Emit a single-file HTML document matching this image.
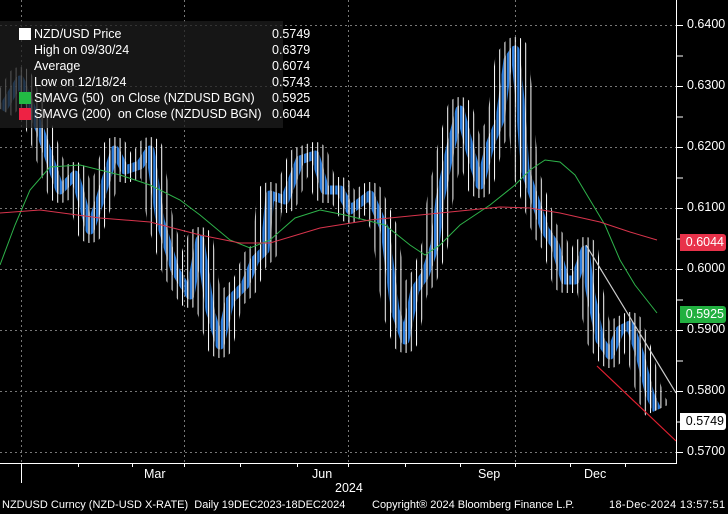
<!DOCTYPE html>
<html><head><meta charset="utf-8"><style>
body{margin:0;background:#000;width:728px;height:514px;overflow:hidden;font-family:"Liberation Sans",sans-serif;position:relative}
svg{position:absolute;left:0;top:0}
.lg{position:absolute;left:0;top:21px;width:283px;height:107px;background:rgba(30,30,30,0.75);color:#fff;font-size:12.5px}
.t{position:absolute;left:34px;height:16px;line-height:16px;white-space:nowrap}
.v{position:absolute;left:272px;height:16px;line-height:16px}
.sq{position:absolute;left:19px;width:12px;height:12px}
.ax{position:absolute;color:#fff;font-size:12.5px;white-space:nowrap}
.ft{position:absolute;color:#fff;font-size:11px;white-space:nowrap;top:499px}
.tag{position:absolute;left:680px;width:46px;height:17px;line-height:17px;font-size:12.5px;text-align:right;padding-right:2px;box-sizing:border-box;border-radius:0 3px 3px 0}
</style></head><body>
<svg width="728" height="514">
<defs>
<pattern id="wk" width="5.2" height="7" patternUnits="userSpaceOnUse">
<rect x="0" y="0" width="1" height="7" fill="#fff"/></pattern>
<pattern id="bd" width="5.2" height="6" patternUnits="userSpaceOnUse">
<rect x="0" y="0" width="1.2" height="6" fill="#fff"/><rect x="2.4" y="0" width="2.4" height="6" fill="#2d7fe0"/></pattern>
</defs>
<g stroke="#777" stroke-dasharray="2,3" stroke-width="1">
<line x1="0" x2="676" y1="25.5" y2="25.5"/><line x1="0" x2="676" y1="86.5" y2="86.5"/><line x1="0" x2="676" y1="147.5" y2="147.5"/><line x1="0" x2="676" y1="208.5" y2="208.5"/><line x1="0" x2="676" y1="269.5" y2="269.5"/><line x1="0" x2="676" y1="330.5" y2="330.5"/><line x1="0" x2="676" y1="391.5" y2="391.5"/><line x1="0" x2="676" y1="452.5" y2="452.5"/>
<line x1="21.5" x2="21.5" y1="0" y2="463"/><line x1="184.5" x2="184.5" y1="0" y2="463"/><line x1="348.5" x2="348.5" y1="0" y2="463"/><line x1="515.5" x2="515.5" y1="0" y2="463"/>
</g>
<g fill="none" stroke-linejoin="round">
<polyline stroke="url(#wk)" stroke-width="26" points="2,110 20,80 40,130 50,160 60,190 75,175 90,230 100,200 115,150 125,170 140,165 150,150 160,220 175,270 190,295 200,240 210,310 220,345 230,300 245,285 255,260 265,250 270,195 285,200 300,160 315,155 325,190 340,190 350,210 370,195 385,230 395,310 405,340 415,290 425,275 435,245 440,200 450,150 460,110 470,150 480,185 490,145 500,120 508,60 515,50 520,100 525,170 535,200 545,230 555,245 565,280 575,280 585,250 590,290 600,340 610,355 620,330 630,325 640,355 645,375 650,395 657,410"/>
<polyline stroke="url(#bd)" stroke-width="9" points="2,110 20,80 40,130 50,160 60,190 75,175 90,230 100,200 115,150 125,170 140,165 150,150 160,220 175,270 190,295 200,240 210,310 220,345 230,300 245,285 255,260 265,250 270,195 285,200 300,160 315,155 325,190 340,190 350,210 370,195 385,230 395,310 405,340 415,290 425,275 435,245 440,200 450,150 460,110 470,150 480,185 490,145 500,120 508,60 515,50 520,100 525,170 535,200 545,230 555,245 565,280 575,280 585,250 590,290 600,340 610,355 620,330 630,325 640,355 645,375 650,395 657,410"/>
</g>
<polyline fill="none" stroke="#2eb34a" stroke-width="1" points="0,265 15,225 30,190 50,167 80,165 120,175 150,185 180,200 200,215 230,240 250,248 270,240 295,218 320,210 345,215 365,220 385,225 410,245 425,255 440,245 460,225 490,205 515,185 530,170 545,160 560,162 575,175 590,200 605,225 620,260 635,285 657,313"/>
<polyline fill="none" stroke="#d8344c" stroke-width="1" points="0,213 40,210 100,218 150,222 200,235 240,243 270,243 320,228 370,220 420,215 470,210 500,207 530,208 560,213 600,222 630,232 657,240"/>
<line x1="586" y1="245" x2="676" y2="393" stroke="#ccc" stroke-width="1.2"/>
<line x1="597" y1="366" x2="676" y2="441" stroke="#e02030" stroke-width="1.2"/>
<rect x="677" y="0" width="51" height="514" fill="#000"/>
<rect x="0" y="464" width="728" height="50" fill="#000"/>
<line x1="676.5" x2="676.5" y1="0" y2="464" stroke="#fff"/><line x1="0" x2="677" y1="463.5" y2="463.5" stroke="#fff"/>
<g stroke="#fff">
<line x1="677" x2="683" y1="25.5" y2="25.5"/><line x1="677" x2="683" y1="56" y2="56"/><line x1="677" x2="683" y1="86.5" y2="86.5"/><line x1="677" x2="683" y1="117" y2="117"/><line x1="677" x2="683" y1="147.5" y2="147.5"/><line x1="677" x2="683" y1="178" y2="178"/><line x1="677" x2="683" y1="208.5" y2="208.5"/><line x1="677" x2="683" y1="239" y2="239"/><line x1="677" x2="683" y1="269.5" y2="269.5"/><line x1="677" x2="683" y1="300" y2="300"/><line x1="677" x2="683" y1="330.5" y2="330.5"/><line x1="677" x2="683" y1="361" y2="361"/><line x1="677" x2="683" y1="391.5" y2="391.5"/><line x1="677" x2="683" y1="422" y2="422"/><line x1="677" x2="683" y1="452.5" y2="452.5"/>
<line x1="21.5" x2="21.5" y1="463" y2="483"/><line x1="78.5" x2="78.5" y1="463" y2="467"/><line x1="132.5" x2="132.5" y1="463" y2="467"/><line x1="184.5" x2="184.5" y1="463" y2="467"/><line x1="240.5" x2="240.5" y1="463" y2="467"/><line x1="297.5" x2="297.5" y1="463" y2="467"/><line x1="348.5" x2="348.5" y1="463" y2="467"/><line x1="405.5" x2="405.5" y1="463" y2="467"/><line x1="460.5" x2="460.5" y1="463" y2="467"/><line x1="515.5" x2="515.5" y1="463" y2="467"/><line x1="570.5" x2="570.5" y1="463" y2="467"/><line x1="625.5" x2="625.5" y1="463" y2="467"/>
</g>
</svg>
<div class="lg">
<div class="sq" style="top:7px;background:#fff"></div>
<div class="t" style="top:5px">NZD/USD Price</div><div class="v" style="top:5px">0.5749</div>
<div class="t" style="top:21px">High on 09/30/24</div><div class="v" style="top:21px">0.6379</div>
<div class="t" style="top:37px">Average</div><div class="v" style="top:37px">0.6074</div>
<div class="t" style="top:53px">Low on 12/18/24</div><div class="v" style="top:53px">0.5743</div>
<div class="sq" style="top:71px;background:#22bb44"></div>
<div class="t" style="top:69px">SMAVG (50)&nbsp; on Close (NZDUSD BGN)</div><div class="v" style="top:69px">0.5925</div>
<div class="sq" style="top:87px;background:#ee2244"></div>
<div class="t" style="top:85px">SMAVG (200)&nbsp; on Close (NZDUSD BGN)</div><div class="v" style="top:85px">0.6044</div>
</div>
<div class="ax" style="left:687px;top:17px">0.6400</div>
<div class="ax" style="left:687px;top:78px">0.6300</div>
<div class="ax" style="left:687px;top:139px">0.6200</div>
<div class="ax" style="left:687px;top:200px">0.6100</div>
<div class="ax" style="left:687px;top:261px">0.6000</div>
<div class="ax" style="left:687px;top:322px">0.5900</div>
<div class="ax" style="left:687px;top:383px">0.5800</div>
<div class="ax" style="left:687px;top:444px">0.5700</div>
<div class="ax" style="left:144px;top:467px">Mar</div>
<div class="ax" style="left:312px;top:467px">Jun</div>
<div class="ax" style="left:478px;top:467px">Sep</div>
<div class="ax" style="left:584px;top:467px">Dec</div>
<div class="ax" style="left:335px;top:481px">2024</div>
<div class="ft" style="left:2px">NZDUSD Curncy (NZD-USD X-RATE)&nbsp; Daily 19DEC2023-18DEC2024</div>
<div class="ft" style="left:372px">Copyright® 2024 Bloomberg Finance L.P.</div>
<div class="ft" style="left:609px;letter-spacing:0.35px">18-Dec-2024 13:57:51</div>
<div class="tag" style="top:234px;background:#e8324a;color:#fff">0.6044</div>
<div class="tag" style="top:306px;background:#22b040;color:#fff">0.5925</div>
<div class="tag" style="top:413px;background:#fff;color:#000">0.5749</div>
</body></html>
